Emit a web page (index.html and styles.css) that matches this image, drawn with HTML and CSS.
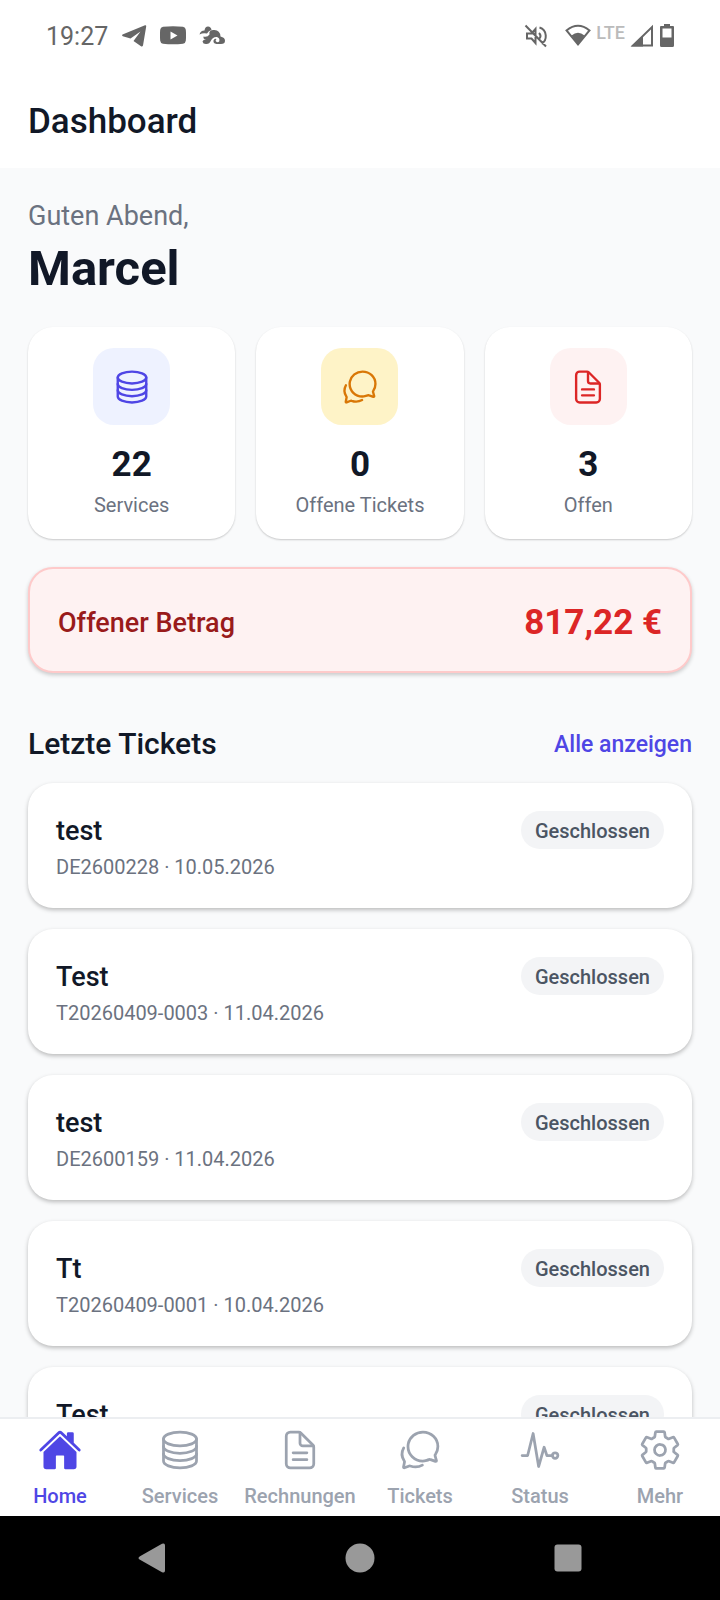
FILE: index.html
```
<!DOCTYPE html>
<html lang="de">
<head>
  <meta charset="UTF-8" />
  <meta name="viewport" content="width=device-width, initial-scale=1.0" />
  <title>Dashboard</title>
  <link rel="stylesheet" href="styles.css">
</head>
<body>
  <svg class="sprite" aria-hidden="true">
    <symbol id="icon-server" viewBox="0 0 512 512">
      <ellipse cx="256" cy="128" rx="192" ry="80" />
      <path d="M448 214c0 44.18-86 80-192 80S64 258.18 64 214M448 300c0 44.18-86 80-192 80S64 344.18 64 300" />
      <path d="M64 127.24v257.52C64 428.52 150 464 256 464s192-35.48 192-79.24V127.24" />
    </symbol>
    <symbol id="icon-document" viewBox="0 0 512 512">
      <path d="M416 221.25V416a48 48 0 01-48 48H144a48 48 0 01-48-48V96a48 48 0 0148-48h98.75a32 32 0 0122.62 9.37l141.26 141.26a32 32 0 019.37 22.62z" />
      <path d="M256 56v120a32 32 0 0032 32h120M176 288h160M176 368h160" />
    </symbol>
    <symbol id="icon-chat" viewBox="0 0 512 512">
      <path d="M431 320.6c-1-3.6 1.2-8.6 3.3-12.2a33.68 33.68 0 012.1-3.1A162 162 0 00464 215c.3-92.2-77.5-167-173.7-167-83.9 0-153.9 57.1-170.3 132.9a160.7 160.7 0 00-3.7 34.2c0 92.3 74.8 169.1 171 169.1 15.3 0 35.9-4.6 47.2-7.7s22.5-7.2 25.4-8.3a26.44 26.44 0 019.3-1.7 26 26 0 0110.1 2l56.7 20.1a13.52 13.52 0 003.9 1 8 8 0 008-8 12.85 12.85 0 00-.5-2.7z" />
      <path d="M66.46 232a146.23 146.23 0 006.39 152.67c2.31 3.49 3.61 6.19 3.21 8s-11.93 61.87-11.93 61.87a8 8 0 002.71 7.68A8.17 8.17 0 0072 464a7.26 7.26 0 002.91-.6l56.21-22a15.7 15.7 0 0112 .2c18.94 7.38 39.88 12 60.83 12A159.21 159.21 0 00284 432.11" />
    </symbol>
  </svg>

  <div class="status-bar">
    <div class="status-left">
      <span class="time">19:27</span>
      <svg class="status-icon" viewBox="0 0 26 26"><path d="M1.500 11.500 24 2.200q1.400-.3 1.200 1.200L22 22.500q-.6 1.600-2 .8l-7.500-5.300 7-9.500L9.500 15.500 1.800 13.200q-1.500-.9-.3-1.700z" /></svg>
      <svg class="status-icon" viewBox="0 0 26 26"><path fill-rule="evenodd" d="M3 3.800Q13 2.800 23 3.800q2.500.4 2.800 3 .5 5.500 0 11-.3 2.600-2.800 3-10 1-20 0-2.500-.4-2.800-3-.5-5.500 0-11 .3-2.600 2.800-3zM10.500 8.500v8l7-4z" /></svg>
      <svg class="status-icon" viewBox="0 0 26 26">
        <path d="M.5 11.500q1-4 5-4Q6 3.500 9 3.500t3.500 3.500q-3 .5-4.500 3.500-4-1-7.500 1z" />
        <path d="M4.500 13.500q4 1 6-2-1-4.500 4-4.500 6.500-.5 7 6.500 4.500 1 4.500 4.300 0 3.200-4 3.200h-4.500q-3.500-.5-3-3.500 1-2.500 3-1.500-1.500 1-.5 2.500 2 1.500 3.300-.3.700-3.200-2.300-4.200-4-.5-6 3.500-1.500 3.500-4.500 3.500-3.500.3-4-2.500.5-2 3.500-2.500-3 .5-2.500-2.500z" />
      </svg>
    </div>
    <div class="status-right">
      <svg class="status-icon icon-mute" viewBox="0 0 24 24">
        <path class="line" d="M1.500 1.500l20.500 21M3 9.500v5h4.500l4 4.500V5l-4 4.500zM15 9q3 3 0 6M15.500 3.500c8 2.500 8 13 2 16" />
      </svg>
      <svg class="status-icon" viewBox="0 0 26 26">
        <path class="line" d="M1.500 7.500Q13-2 24.500 7.500L13 21.500z" />
        <path d="M6.500 12.500q6.500-5.500 13 0L13 21.500z" />
      </svg>
      <span class="network">LTE</span>
      <svg class="status-icon icon-signal" viewBox="0 0 24 24">
        <path class="line" d="M3 21.500h19V3z" />
        <path d="M1 22.500h12V12z" />
      </svg>
      <svg class="status-icon icon-battery" viewBox="0 0 16 26">
        <path fill-rule="evenodd" d="M5 1h6v2h3q1 0 1 1v18.500q0 1.500-1.500 1.500h-11Q1 24 1 22.500V4q0-1 1-1h3zM3.500 5.500v9h9v-9z" />
      </svg>
    </div>
  </div>

  <header class="app-header">
    <h1>Dashboard</h1>
  </header>

  <main>
    <p class="greeting">Guten Abend,</p>
    <h2 class="user-name">Marcel</h2>

    <section class="stats">
      <div class="card stat">
        <div class="stat-icon indigo"><svg class="icon"><use href="#icon-server" /></svg></div>
        <strong>22</strong>
        <span>Services</span>
      </div>
      <div class="card stat">
        <div class="stat-icon amber"><svg class="icon"><use href="#icon-chat" /></svg></div>
        <strong>0</strong>
        <span>Offene Tickets</span>
      </div>
      <div class="card stat">
        <div class="stat-icon red"><svg class="icon"><use href="#icon-document" /></svg></div>
        <strong>3</strong>
        <span>Offen</span>
      </div>
    </section>

    <section class="amount">
      <span>Offener Betrag</span>
      <strong>817,22 €</strong>
    </section>

    <div class="section-header">
      <h3>Letzte Tickets</h3>
      <a href="#">Alle anzeigen</a>
    </div>

    <section class="tickets">
      <a class="card ticket" href="#">
        <div>
          <h4>test</h4>
          <p>DE2600228 · 10.05.2026</p>
        </div>
        <span class="badge">Geschlossen</span>
      </a>
      <a class="card ticket" href="#">
        <div>
          <h4>Test</h4>
          <p>T20260409-0003 · 11.04.2026</p>
        </div>
        <span class="badge">Geschlossen</span>
      </a>
      <a class="card ticket" href="#">
        <div>
          <h4>test</h4>
          <p>DE2600159 · 11.04.2026</p>
        </div>
        <span class="badge">Geschlossen</span>
      </a>
      <a class="card ticket" href="#">
        <div>
          <h4>Tt</h4>
          <p>T20260409-0001 · 10.04.2026</p>
        </div>
        <span class="badge">Geschlossen</span>
      </a>
      <a class="card ticket" href="#">
        <div>
          <h4>Test</h4>
        </div>
        <span class="badge">Geschlossen</span>
      </a>
    </section>
  </main>

  <nav class="tab-bar">
    <a class="active" href="#">
      <svg class="icon solid" viewBox="0 0 512 512">
        <path d="M261.56 101.28a8 8 0 00-11.06 0L66.4 277.15a8 8 0 00-2.47 5.79L63.9 448a32 32 0 0032 32H192a16 16 0 0016-16V328a8 8 0 018-8h80a8 8 0 018 8v136a16 16 0 0016 16h96.06a32 32 0 0032-32V282.94a8 8 0 00-2.47-5.79z" />
        <path d="M490.91 244.15l-74.8-71.56V64a16 16 0 00-16-16h-48a16 16 0 00-16 16v32l-57.92-55.38C272.77 35.14 264.71 32 256 32c-8.68 0-16.72 3.14-22.14 8.63l-212.7 203.5c-6.22 6-7 15.87-1.34 22.37A16 16 0 0043 267.56L250.5 69.28a8 8 0 0111.06 0l207.52 198.28a16 16 0 0022.59-.44c6.14-6.36 5.63-16.86-.76-22.97z" />
      </svg>
      <span>Home</span>
    </a>
    <a href="#">
      <svg class="icon"><use href="#icon-server" /></svg>
      <span>Services</span>
    </a>
    <a href="#">
      <svg class="icon"><use href="#icon-document" /></svg>
      <span>Rechnungen</span>
    </a>
    <a href="#">
      <svg class="icon"><use href="#icon-chat" /></svg>
      <span>Tickets</span>
    </a>
    <a href="#">
      <svg class="icon" viewBox="0 0 512 512">
        <path d="M48 320h64l64-256 64 384 64-224 32 96h64" />
        <circle cx="432" cy="320" r="32" />
      </svg>
      <span>Status</span>
    </a>
    <a href="#">
      <svg class="icon" viewBox="0 0 512 512">
        <path d="M262.29 192.31a64 64 0 1057.4 57.4 64.13 64.13 0 00-57.4-57.4zM416.39 256a154.34 154.34 0 01-1.53 20.79l45.21 35.46a10.81 10.81 0 012.45 13.75l-42.77 74a10.81 10.81 0 01-13.14 4.59l-44.9-18.08a16.11 16.11 0 00-15.17 1.75A164.48 164.48 0 01325 400.8a15.94 15.94 0 00-8.82 12.14l-6.73 47.89a11.08 11.08 0 01-10.68 9.17h-85.54a11.11 11.11 0 01-10.69-8.87l-6.72-47.82a16.07 16.07 0 00-9-12.22 155.3 155.3 0 01-21.46-12.57 16 16 0 00-15.11-1.71l-44.89 18.07a10.81 10.81 0 01-13.14-4.58l-42.77-74a10.8 10.8 0 012.45-13.75l38.21-30a16.05 16.05 0 006-14.08c-.36-4.17-.58-8.33-.58-12.5s.21-8.27.58-12.35a16 16 0 00-6.07-13.94l-38.19-30A10.81 10.81 0 0149.48 186l42.77-74a10.81 10.81 0 0113.14-4.59l44.9 18.08a16.11 16.11 0 0015.17-1.75A164.48 164.48 0 01187 111.2a15.94 15.94 0 008.82-12.14l6.73-47.89A11.08 11.08 0 01213.23 42h85.54a11.11 11.11 0 0110.69 8.87l6.72 47.82a16.07 16.07 0 009 12.22 155.3 155.3 0 0121.46 12.57 16 16 0 0015.11 1.71l44.89-18.07a10.81 10.81 0 0113.14 4.58l42.77 74a10.8 10.8 0 01-2.45 13.75l-38.21 30a16.05 16.05 0 00-6.05 14.08c.33 4.14.55 8.3.55 12.47z" />
      </svg>
      <span>Mehr</span>
    </a>
  </nav>

  <div class="system-nav">
    <button type="button" aria-label="Zurück">
      <svg viewBox="0 0 30 30"><path d="M3 13.200 25 .8q3-1.300 3 1.700v25q0 3-3 1.700L3 16.800q-3-1.800 0-3.600z" /></svg>
    </button>
    <button type="button" aria-label="Startbildschirm">
      <svg viewBox="0 0 30 30"><circle cx="15" cy="15" r="14.500" /></svg>
    </button>
    <button type="button" aria-label="Letzte Apps">
      <svg viewBox="0 0 30 30"><rect x="1.500" y="1.500" width="27" height="27" rx="3" /></svg>
    </button>
  </div>
</body>
</html>
```

FILE: styles.css
```
* {
  box-sizing: border-box;
}
body {
  display: flex;
  flex-direction: column;
  height: 100vh;
  margin: 0;
  font-family: Roboto, sans-serif;
  background-color: #f9fafb;
  color: #111827;
}
h1, h2, h3, h4, p {
  margin: 0;
}
a {
  color: inherit;
  text-decoration: none;
}
.sprite {
  position: absolute;
  width: 0;
  height: 0;
}
.icon {
  width: 44px;
  height: 44px;
  fill: none;
  stroke: currentColor;
  stroke-width: 32px;
  stroke-linecap: round;
  stroke-linejoin: round;
}
.icon.solid {
  fill: currentColor;
  stroke: none;
}

/* Status bar */
.status-bar {
  display: flex;
  justify-content: space-between;
  align-items: center;
  height: 72px;
  padding: 0 45px 0 46px;
  background: white;
  color: #666;
}
.status-left, .status-right {
  display: flex;
  align-items: center;
}
.status-left {
  gap: 13px;
}
.status-right {
  gap: 5px;
}
.time {
  font-size: 25px;
}
.network {
  padding-bottom: 6px;
  font-size: 18px;
  font-weight: 500;
  line-height: 26px;
  color: #bbb;
}
.status-icon {
  width: 26px;
  height: 26px;
  fill: currentColor;
}
.status-icon .line {
  fill: none;
  stroke: currentColor;
  stroke-width: 2;
}
.icon-mute {
  width: 24px;
  height: 24px;
  margin-right: 12px;
}
.icon-signal {
  width: 24px;
  height: 24px;
}
.icon-battery {
  width: 16px;
}

.app-header {
  padding: 26px 28px 22px;
  background: white;
}
.app-header h1 {
  font-size: 35px;
  font-weight: 500;
  line-height: 48px;
}

main {
  flex: 1;
  min-height: 0;
  padding: 28px 28px 0;
  overflow-y: auto;
  scrollbar-width: none;
}
.greeting {
  font-size: 27px;
  line-height: 40px;
  color: #6b7280;
}
.user-name {
  margin-bottom: 25px;
  font-size: 49px;
  line-height: 66px;
}
.card {
  background: white;
  border-radius: 25px;
  box-shadow: 0 2px 4px rgba(0, 0, 0, 0.25);
}

/* Stats */
.stats {
  display: grid;
  grid-template-columns: repeat(3, 1fr);
  gap: 21px;
}
.stat {
  display: flex;
  flex-direction: column;
  align-items: center;
  padding: 21px 10px;
  box-shadow: 0 1px 2px rgba(0, 0, 0, 0.2);
}
.stat-icon {
  display: flex;
  align-items: center;
  justify-content: center;
  width: 77px;
  height: 77px;
  border-radius: 21px;
}
.stat-icon .icon {
  width: 38px;
  height: 38px;
}
.indigo {
  background: #eef2ff;
  color: #4f46e5;
}
.amber {
  background: #fef3c7;
  color: #d97706;
}
.red {
  background: #fef2f2;
  color: #dc2626;
}
.stat strong {
  margin-top: 19px;
  font-size: 35px;
  line-height: 42px;
}
.stat span {
  margin-top: 6px;
  font-size: 20px;
  line-height: 26px;
  color: #6b7280;
}

.amount {
  display: flex;
  justify-content: space-between;
  align-items: center;
  margin-top: 28px;
  padding: 31px 28px 25px;
  background: #fef2f2;
  border: 2px solid #fecaca;
  border-radius: 25px;
  box-shadow: 0 2px 4px rgba(0, 0, 0, 0.2);
}
.amount span {
  font-size: 27px;
  font-weight: 500;
  color: #991b1b;
}
.amount strong {
  font-size: 35px;
  line-height: 46px;
  color: #dc2626;
}

/* Tickets */
.section-header {
  display: flex;
  justify-content: space-between;
  align-items: center;
  margin: 51px 0 19px;
}
.section-header h3 {
  font-size: 30px;
  font-weight: 500;
  line-height: 40px;
}
.section-header a {
  font-size: 23px;
  font-weight: 500;
  color: #4f46e5;
}
.tickets {
  display: flex;
  flex-direction: column;
  gap: 21px;
}
.ticket {
  display: flex;
  justify-content: space-between;
  align-items: flex-start;
  min-height: 125px;
  padding: 28px 28px 24px;
}
.ticket h4 {
  font-size: 27px;
  font-weight: 500;
  line-height: 40px;
}
.ticket p {
  font-size: 20px;
  line-height: 33px;
  color: #6b7280;
}
.badge {
  padding: 7px 14px 5px;
  border-radius: 20px;
  background: #f3f4f6;
  font-size: 20px;
  font-weight: 500;
  line-height: 26px;
  color: #4b5563;
}

/* Bottom tabs */
.tab-bar {
  display: grid;
  grid-template-columns: repeat(6, 1fr);
  padding: 9px 0 6px;
  border-top: 2px solid #eceef1;
  background: white;
  color: #9ca3af;
}
.tab-bar a {
  display: flex;
  flex-direction: column;
  align-items: center;
  gap: 10px;
}
.tab-bar .active {
  color: #4f46e5;
}
.tab-bar span {
  font-size: 20px;
  font-weight: 500;
  line-height: 28px;
}

.system-nav {
  display: grid;
  grid-template-columns: repeat(3, 1fr);
  justify-items: center;
  padding: 20px 48px;
  background: black;
}
.system-nav button {
  display: flex;
  align-items: center;
  justify-content: center;
  width: 44px;
  height: 44px;
  padding: 0;
  border: none;
  background: none;
  cursor: pointer;
}
.system-nav svg {
  width: 30px;
  height: 30px;
  fill: #999;
}
```
